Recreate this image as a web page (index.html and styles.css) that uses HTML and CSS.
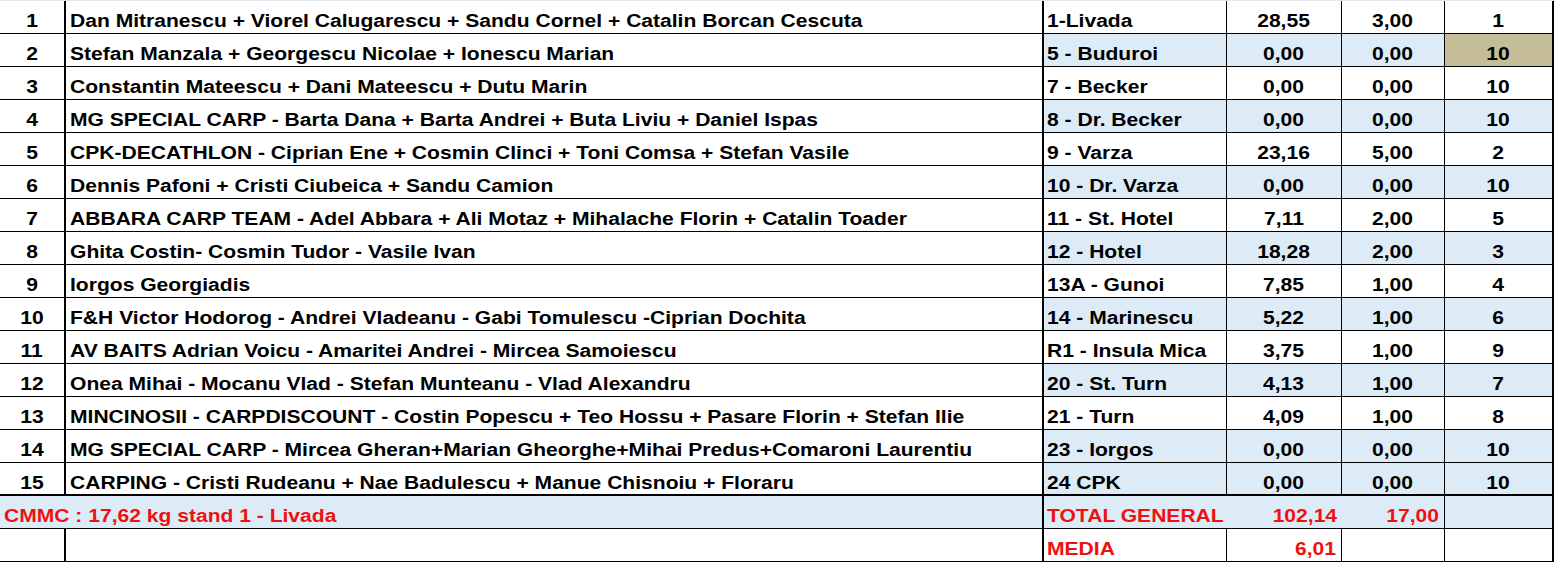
FILE: index.html
```html
<!DOCTYPE html>
<html lang="ro">
<head>
<meta charset="utf-8">
<title>Clasament</title>
<link rel="stylesheet" href="styles.css">
</head>
<body>
<table class="sheet">
  <colgroup>
    <col class="c-nr"><col class="c-team"><col class="c-stand"><col class="c-kg"><col class="c-pts"><col class="c-rank">
  </colgroup>
  <tbody>
    <tr><td class="nr"><span class="t">1</span></td><td class="team"><span class="t">Dan Mitranescu + Viorel Calugarescu + Sandu Cornel + Catalin Borcan Cescuta</span></td><td class="stand"><span class="t">1-Livada</span></td><td class="num"><span class="t">28,55</span></td><td class="num"><span class="t">3,00</span></td><td class="num"><span class="t">1</span></td></tr>
    <tr class="alt"><td class="nr"><span class="t">2</span></td><td class="team"><span class="t">Stefan Manzala + Georgescu Nicolae + Ionescu Marian</span></td><td class="stand"><span class="t">5 - Buduroi</span></td><td class="num"><span class="t">0,00</span></td><td class="num"><span class="t">0,00</span></td><td class="num tan"><span class="t">10</span></td></tr>
    <tr><td class="nr"><span class="t">3</span></td><td class="team"><span class="t">Constantin Mateescu + Dani Mateescu + Dutu Marin</span></td><td class="stand"><span class="t">7 - Becker</span></td><td class="num"><span class="t">0,00</span></td><td class="num"><span class="t">0,00</span></td><td class="num"><span class="t">10</span></td></tr>
    <tr class="alt"><td class="nr"><span class="t">4</span></td><td class="team"><span class="t">MG SPECIAL CARP - Barta Dana + Barta Andrei + Buta Liviu + Daniel Ispas</span></td><td class="stand"><span class="t">8 - Dr. Becker</span></td><td class="num"><span class="t">0,00</span></td><td class="num"><span class="t">0,00</span></td><td class="num"><span class="t">10</span></td></tr>
    <tr><td class="nr"><span class="t">5</span></td><td class="team"><span class="t">CPK-DECATHLON - Ciprian Ene + Cosmin Clinci + Toni Comsa + Stefan Vasile</span></td><td class="stand"><span class="t">9 - Varza</span></td><td class="num"><span class="t">23,16</span></td><td class="num"><span class="t">5,00</span></td><td class="num"><span class="t">2</span></td></tr>
    <tr class="alt"><td class="nr"><span class="t">6</span></td><td class="team"><span class="t">Dennis Pafoni + Cristi Ciubeica + Sandu Camion</span></td><td class="stand"><span class="t">10 - Dr. Varza</span></td><td class="num"><span class="t">0,00</span></td><td class="num"><span class="t">0,00</span></td><td class="num"><span class="t">10</span></td></tr>
    <tr><td class="nr"><span class="t">7</span></td><td class="team"><span class="t">ABBARA CARP TEAM - Adel Abbara + Ali Motaz + Mihalache Florin + Catalin Toader</span></td><td class="stand"><span class="t">11 - St. Hotel</span></td><td class="num"><span class="t">7,11</span></td><td class="num"><span class="t">2,00</span></td><td class="num"><span class="t">5</span></td></tr>
    <tr class="alt"><td class="nr"><span class="t">8</span></td><td class="team"><span class="t">Ghita Costin- Cosmin Tudor - Vasile Ivan</span></td><td class="stand"><span class="t">12 - Hotel</span></td><td class="num"><span class="t">18,28</span></td><td class="num"><span class="t">2,00</span></td><td class="num"><span class="t">3</span></td></tr>
    <tr><td class="nr"><span class="t">9</span></td><td class="team"><span class="t">Iorgos Georgiadis</span></td><td class="stand"><span class="t">13A - Gunoi</span></td><td class="num"><span class="t">7,85</span></td><td class="num"><span class="t">1,00</span></td><td class="num"><span class="t">4</span></td></tr>
    <tr class="alt"><td class="nr"><span class="t">10</span></td><td class="team"><span class="t">F&amp;H Victor Hodorog - Andrei Vladeanu - Gabi Tomulescu -Ciprian Dochita</span></td><td class="stand"><span class="t">14 - Marinescu</span></td><td class="num"><span class="t">5,22</span></td><td class="num"><span class="t">1,00</span></td><td class="num"><span class="t">6</span></td></tr>
    <tr><td class="nr"><span class="t">11</span></td><td class="team"><span class="t">AV BAITS Adrian Voicu - Amaritei Andrei - Mircea Samoiescu</span></td><td class="stand"><span class="t">R1 - Insula Mica</span></td><td class="num"><span class="t">3,75</span></td><td class="num"><span class="t">1,00</span></td><td class="num"><span class="t">9</span></td></tr>
    <tr class="alt"><td class="nr"><span class="t">12</span></td><td class="team"><span class="t">Onea Mihai - Mocanu Vlad - Stefan Munteanu - Vlad Alexandru</span></td><td class="stand"><span class="t">20 - St. Turn</span></td><td class="num"><span class="t">4,13</span></td><td class="num"><span class="t">1,00</span></td><td class="num"><span class="t">7</span></td></tr>
    <tr><td class="nr"><span class="t">13</span></td><td class="team"><span class="t">MINCINOSII - CARPDISCOUNT - Costin Popescu + Teo Hossu + Pasare Florin + Stefan Ilie</span></td><td class="stand"><span class="t">21 - Turn</span></td><td class="num"><span class="t">4,09</span></td><td class="num"><span class="t">1,00</span></td><td class="num"><span class="t">8</span></td></tr>
    <tr class="alt"><td class="nr"><span class="t">14</span></td><td class="team"><span class="t">MG SPECIAL CARP - Mircea Gheran+Marian Gheorghe+Mihai Predus+Comaroni Laurentiu</span></td><td class="stand"><span class="t">23 - Iorgos</span></td><td class="num"><span class="t">0,00</span></td><td class="num"><span class="t">0,00</span></td><td class="num"><span class="t">10</span></td></tr>
    <tr class="alt last"><td class="nr"><span class="t">15</span></td><td class="team"><span class="t">CARPING - Cristi Rudeanu + Nae Badulescu + Manue Chisnoiu + Floraru</span></td><td class="stand"><span class="t">24 CPK</span></td><td class="num"><span class="t">0,00</span></td><td class="num"><span class="t">0,00</span></td><td class="num"><span class="t">10</span></td></tr>
    <tr class="total"><td class="note" colspan="2"><span class="t">CMMC : 17,62 kg stand 1 - Livada</span></td><td class="stand red open"><span class="t">TOTAL GENERAL</span></td><td class="right red open"><span class="t">102,14</span></td><td class="right red"><span class="t">17,00</span></td><td class="num"></td></tr>
    <tr class="media"><td class="nr"></td><td class="team"></td><td class="stand red"><span class="t">MEDIA</span></td><td class="right red"><span class="t">6,01</span></td><td class="num"></td><td class="num"></td></tr>
  </tbody>
</table>
</body>
</html>
```

FILE: styles.css
```css
html, body {
  margin: 0;
  padding: 0;
  background: #ffffff;
}

.sheet {
  table-layout: fixed;
  border-collapse: separate;
  border-spacing: 0;
  width: 1554px;
  border-top: 1px solid #e3e7ec;
  font-family: "Liberation Sans", Arial, sans-serif;
  font-weight: bold;
  font-size: 18px;
  color: #000000;
}

.c-nr { width: 66px; }
.c-team { width: 978px; }
.c-stand { width: 183px; }
.c-kg { width: 115px; }
.c-pts { width: 103px; }
.c-rank { width: 109px; }

.sheet td {
  box-sizing: border-box;
  height: 33px;
  padding: 10px 0 0 0;
  border-right: 1px solid #000000;
  border-bottom: 1px solid #000000;
  white-space: nowrap;
  overflow: hidden;
  vertical-align: top;
  line-height: 20px;
}

.t {
  display: inline-block;
  transform: scaleX(1.17);
  transform-origin: center;
}

.sheet td.nr {
  text-align: center;
  border-right-width: 2px;
}

.sheet td.team {
  text-align: left;
  padding-left: 4px;
  border-right-width: 2px;
}

.sheet td.stand {
  text-align: left;
  padding-left: 3px;
}

.sheet td.team .t,
.sheet td.stand .t,
.sheet td.note .t {
  transform-origin: left center;
}

.sheet td.num {
  text-align: center;
}

.sheet td:last-child {
  border-right-width: 2px;
}

.sheet tr.alt td.stand,
.sheet tr.alt td.num {
  background: #ddebf7;
}

.sheet tr.alt td.tan {
  background: #c4bd97;
}

.sheet tr.last td {
  border-bottom-width: 2px;
}

.sheet tr.total td {
  background: #ddebf7;
}

.sheet td.note {
  text-align: left;
  padding-left: 4px;
  color: #f01010;
  border-right-width: 2px;
}

.sheet td.open {
  border-right: none;
}

.sheet td.right {
  text-align: right;
  padding-right: 5px;
}

.sheet td.right .t {
  transform-origin: right center;
}

.sheet .red {
  color: #f01010;
}
```
